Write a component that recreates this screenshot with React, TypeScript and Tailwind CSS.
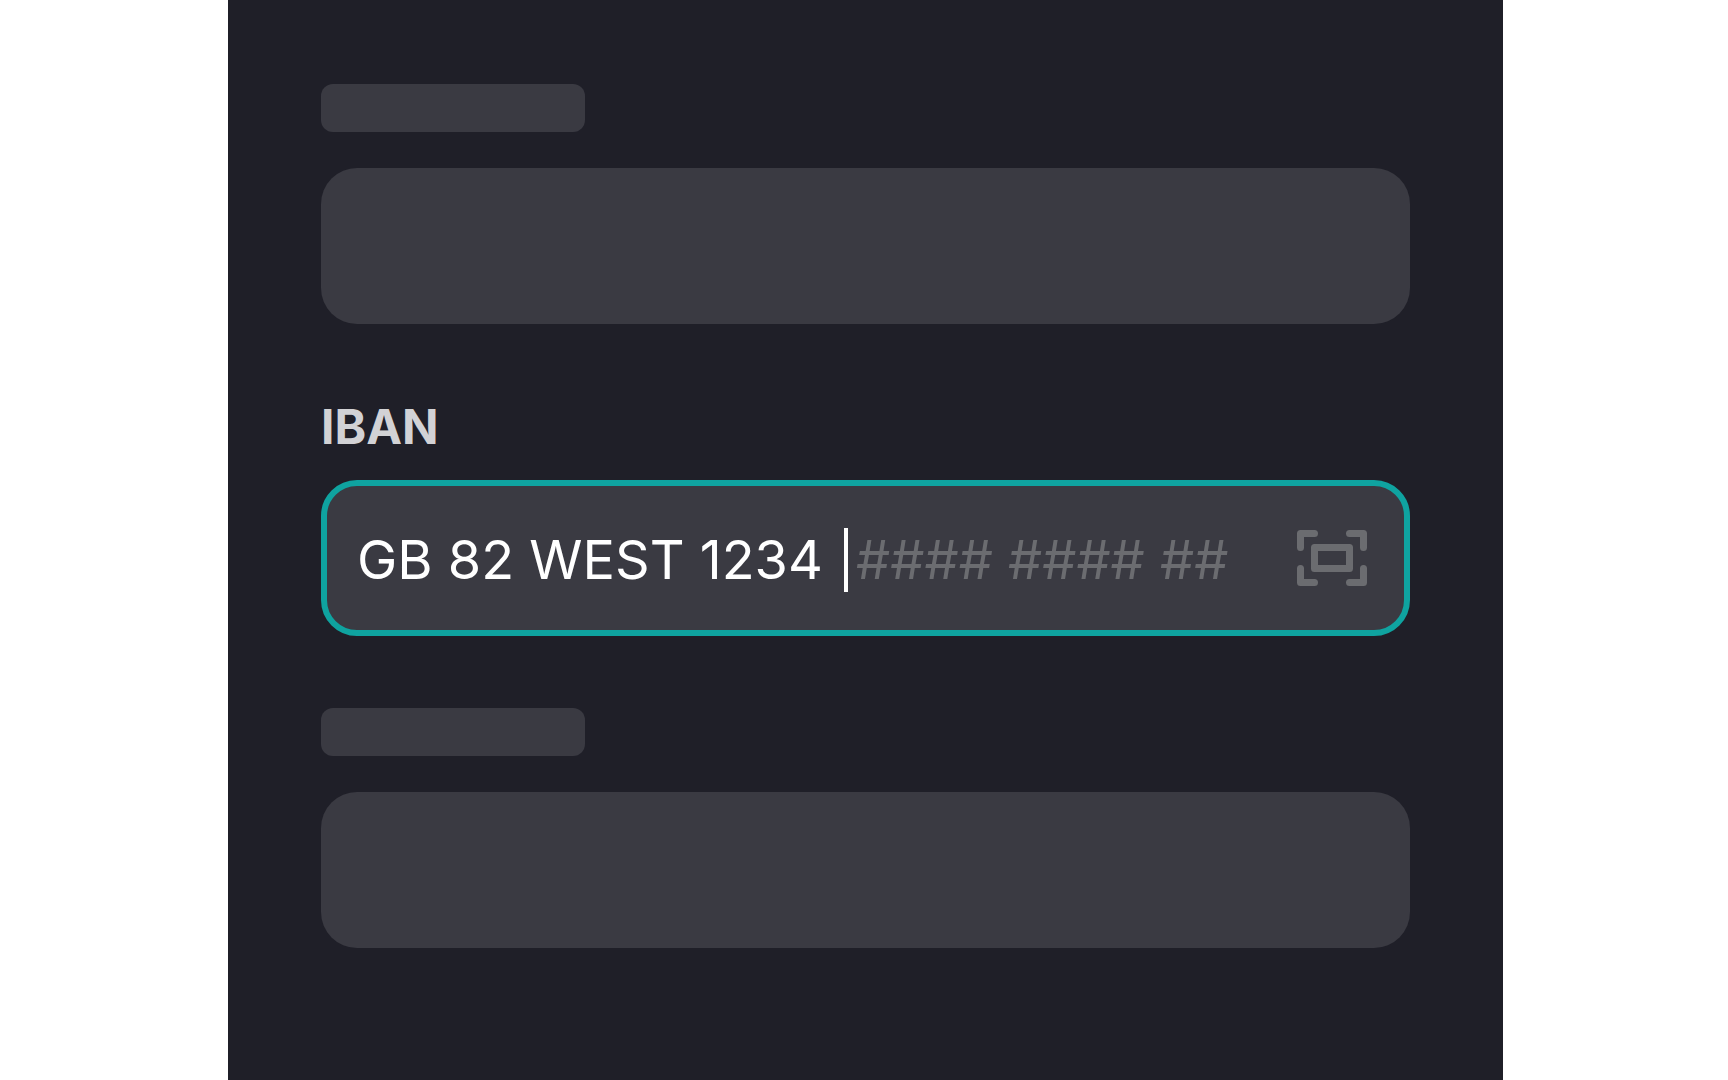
import { useState } from 'react';

const MASK = '#### #### ##';

function SkeletonField() {
  return (
    <div className="flex flex-col gap-9">
      <div className="h-12 w-66 rounded-xl bg-[#3a3a42]" />
      <div className="h-39 rounded-[36px] bg-[#3a3a42]" />
    </div>
  );
}

function ScanIcon() {
  return (
    <svg
      viewBox="0 0 12 12"
      className="size-21"
      fill="none"
      stroke="currentColor"
      strokeLinecap="round"
      strokeLinejoin="round"
      aria-hidden="true"
    >
      <path d="M1.5 4.5v-2h2M8.5 2.5h2v2M10.5 7.5v2h-2M3.5 9.5h-2v-2" />
      <rect x="3.5" y="4.5" width="5" height="3" />
    </svg>
  );
}

function IbanField() {
  const [iban, setIban] = useState('GB 82 WEST 1234 ');

  return (
    <div className="flex flex-col gap-[22px]">
      <label htmlFor="iban" className="text-5xl/[62px] font-bold text-[#d2d2d5]">
        IBAN
      </label>
      <div className="flex h-39 items-center justify-between rounded-[36px] border-6 border-[#0fa3a0] bg-[#3a3a42] px-[30px]">
        <div className="flex min-w-0 items-center pt-[3px] text-[54px]/16 whitespace-pre">
          <input
            id="iban"
            type="text"
            value={iban}
            onChange={(e) => setIban(e.target.value)}
            autoComplete="off"
            spellCheck={false}
            className="min-w-0 bg-transparent pr-1.5 text-white caret-transparent outline-none [field-sizing:content]"
          />
          <span className="h-16 w-1 shrink-0 bg-white" />
          <span className="pl-2 text-[#6b6c70]">{MASK}</span>
        </div>
        <button type="button" aria-label="Scan IBAN" className="shrink-0 text-[#6b6c70]">
          <ScanIcon />
        </button>
      </div>
    </div>
  );
}

export default function App() {
  return (
    <main className="min-h-screen bg-white pl-[3px] font-[Inter,sans-serif]">
      <form className="mx-auto flex min-h-screen max-w-[1275px] flex-col gap-18 bg-[#1f1f28] px-[93px] py-21">
        <SkeletonField />
        <IbanField />
        <SkeletonField />
      </form>
    </main>
  );
}
